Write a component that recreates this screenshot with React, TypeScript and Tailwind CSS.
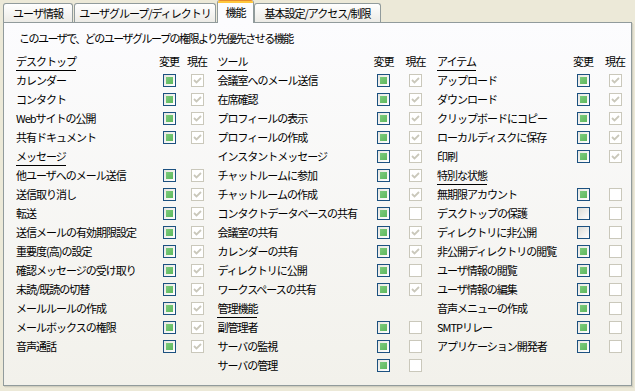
import React from "react";

type Item = { label: string; heading?: boolean; change?: boolean; current?: boolean };

const col1: Item[] = [
  { label: "カレンダー", change: true, current: true },
  { label: "コンタクト", change: true, current: true },
  { label: "Webサイトの公開", change: true, current: true },
  { label: "共有ドキュメント", change: true, current: true },
  { label: "メッセージ", heading: true },
  { label: "他ユーザへのメール送信", change: true, current: true },
  { label: "送信取り消し", change: true, current: true },
  { label: "転送", change: true, current: true },
  { label: "送信メールの有効期限設定", change: true, current: true },
  { label: "重要度(高)の設定", change: true, current: true },
  { label: "確認メッセージの受け取り", change: true, current: true },
  { label: "未読/既読の切替", change: true, current: true },
  { label: "メールルールの作成", change: true, current: true },
  { label: "メールボックスの権限", change: true, current: true },
  { label: "音声通話", change: true, current: true },
];

const col2: Item[] = [
  { label: "会議室へのメール送信", change: true, current: true },
  { label: "在席確認", change: true, current: true },
  { label: "プロフィールの表示", change: true, current: true },
  { label: "プロフィールの作成", change: true, current: true },
  { label: "インスタントメッセージ", change: true, current: true },
  { label: "チャットルームに参加", change: true, current: true },
  { label: "チャットルームの作成", change: true, current: true },
  { label: "コンタクトデータベースの共有", change: true, current: false },
  { label: "会議室の共有", change: true, current: true },
  { label: "カレンダーの共有", change: true, current: true },
  { label: "ディレクトリに公開", change: true, current: false },
  { label: "ワークスペースの共有", change: true, current: true },
  { label: "管理機能", heading: true },
  { label: "副管理者", change: true, current: false },
  { label: "サーバの監視", change: true, current: false },
  { label: "サーバの管理", change: true, current: false },
];

const col3: Item[] = [
  { label: "アップロード", change: true, current: true },
  { label: "ダウンロード", change: true, current: true },
  { label: "クリップボードにコピー", change: true, current: true },
  { label: "ローカルディスクに保存", change: true, current: true },
  { label: "印刷", change: true, current: true },
  { label: "特別な状態", heading: true },
  { label: "無期限アカウント", change: true, current: false },
  { label: "デスクトップの保護", change: false, current: false },
  { label: "ディレクトリに非公開", change: false, current: false },
  { label: "非公開ディレクトリの閲覧", change: true, current: false },
  { label: "ユーザ情報の閲覧", change: true, current: false },
  { label: "ユーザ情報の編集", change: true, current: false },
  { label: "音声メニューの作成", change: true, current: false },
  { label: "SMTPリレー", change: true, current: false },
  { label: "アプリケーション開発者", change: true, current: false },
];

function ChangeBox({ on }: { on: boolean }) {
  if (on) {
    return (
      <span className="flex h-[13px] w-[13px] items-center justify-center border border-[#1C5180] bg-linear-to-br from-[#E6E6E0] to-white">
        <span className="h-[7px] w-[7px] bg-linear-to-br from-[#7CCB7C] to-[#5EB85E]" />
      </span>
    );
  }
  return (
    <span className="block h-[13px] w-[13px] border border-[#1C5180] bg-linear-to-br from-[#DCDCD7] to-white" />
  );
}

function CurrentBox({ on }: { on: boolean }) {
  return (
    <span className="flex h-[13px] w-[13px] items-center justify-center border border-[#CAC8BB] bg-white">
      {on && (
        <svg width="11" height="11" viewBox="0 0 11 11">
          <polyline points="2,5 4.5,7.5 9,3" fill="none" stroke="#CAC8BB" strokeWidth="1.8" />
        </svg>
      )}
    </span>
  );
}

function Heading({ children }: { children: React.ReactNode }) {
  return <span className="border-b border-black pb-[1px] leading-[13px]">{children}</span>;
}

function Column({
  title,
  items,
  labelCls,
  cellCls,
}: {
  title: string;
  items: Item[];
  labelCls: string;
  cellCls: string;
}) {
  return (
    <div className="flex flex-col">
      <div className="flex h-[19px] items-center">
        <div className={labelCls}>
          <Heading>{title}</Heading>
        </div>
        <div className={cellCls + " text-center"}>変更</div>
        <div className={cellCls + " text-center"}>現在</div>
      </div>
      {items.map((it, i) => (
        <div key={i} className="flex h-[19px] items-center">
          <div className={labelCls + " whitespace-nowrap"}>
            {it.heading ? <Heading>{it.label}</Heading> : it.label}
          </div>
          {!it.heading && (
            <>
              <div className={cellCls + " flex justify-center"}>
                <ChangeBox on={!!it.change} />
              </div>
              <div className={cellCls + " flex justify-center"}>
                <CurrentBox on={!!it.current} />
              </div>
            </>
          )}
        </div>
      ))}
    </div>
  );
}

function Tab({ label, cls, selected }: { label: string; cls: string; selected?: boolean }) {
  if (selected) {
    return (
      <div
        className={
          cls +
          " relative z-10 -mb-[1px] flex h-[23px] flex-col overflow-hidden rounded-t-[3px] border-x border-[#919B9C] bg-[#FCFCFE]"
        }
      >
        <div className="h-[1px] bg-[#E68B2C]" />
        <div className="h-[2px] bg-[#FFC73C]" />
        <div className="flex flex-1 items-center justify-center pb-[1px]">{label}</div>
      </div>
    );
  }
  return (
    <div
      className={
        cls +
        " flex h-[19px] items-center justify-center whitespace-nowrap rounded-t-[3px] border-x border-t border-[#919B9C] bg-linear-to-b from-white to-[#ECEBE6]"
      }
    >
      {label}
    </div>
  );
}

export default function App() {
  return (
    <div className="h-[391px] w-[635px] overflow-hidden bg-[#ECE9D8] font-['Noto_Sans_CJK_JP',sans-serif] text-[11px] leading-none tracking-[-1px] text-black">
      <div className="flex items-end pl-[3px] pt-0">
        <Tab label="ユーザ情報" cls="w-[70px]" />
        <Tab label="ユーザグループ/ディレクトリ" cls="ml-[1px] w-[142px]" />
        <Tab label="機能" cls="ml-[1px] w-[37px]" selected />
        <Tab label="基本設定/アクセス/制限" cls="w-[127px]" />
      </div>
      <div className="ml-[3px] h-[364px] w-[629px] border border-[#919B9C] bg-linear-to-b from-[#FCFCFE] to-[#F2F1EB] shadow-[1px_1px_0_#D0CEBF,2px_2px_0_#E3E0D0]">
        <div className="pl-[12px] pt-[6px]">
          <div className="flex h-[19px] items-center pl-[3px] tracking-[-1.5px]">
            このユーザで、どのユーザグループの権限より先優先させる機能
          </div>
          <div className="mt-[4px] flex">
            <Column title="デスクトップ" items={col1} labelCls="w-[139px]" cellCls="w-[28px]" />
            <div className="w-[7px]" />
            <Column title="ツール" items={col2} labelCls="w-[150px]" cellCls="w-[32px]" />
            <div className="w-[6px]" />
            <Column title="アイテム" items={col3} labelCls="w-[130px]" cellCls="w-[32px]" />
          </div>
        </div>
      </div>
    </div>
  );
}
